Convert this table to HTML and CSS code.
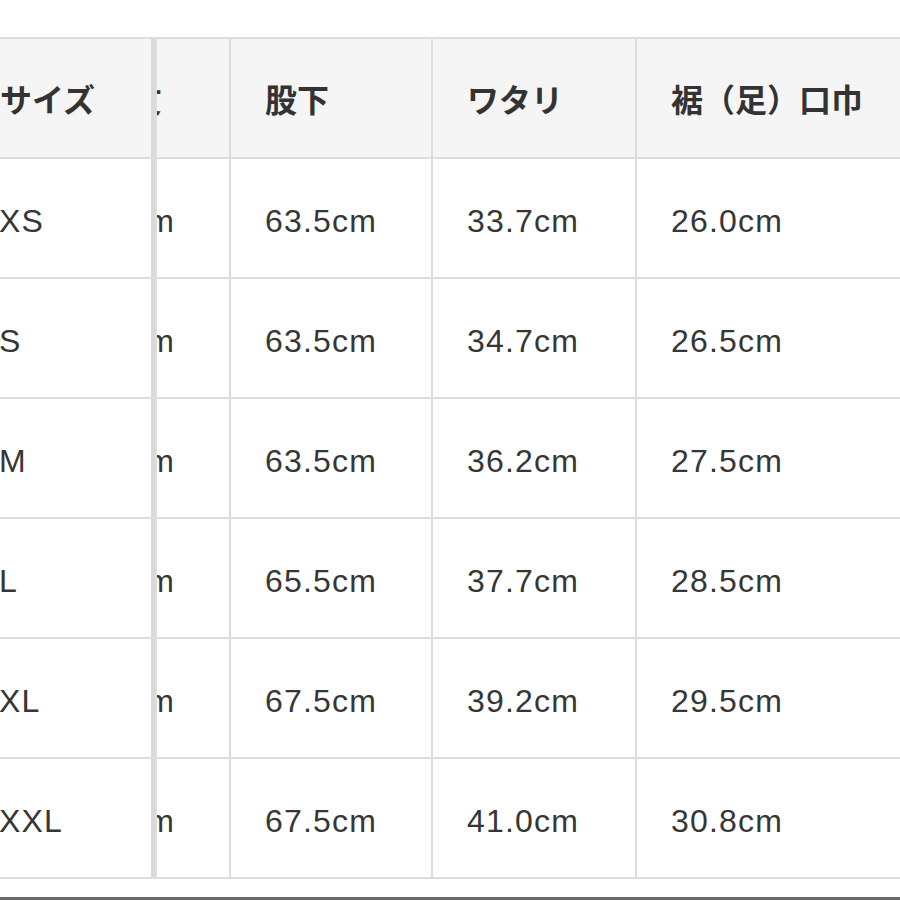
FILE: index.html
```html
<!DOCTYPE html>
<html lang="ja">
<head>
<meta charset="utf-8">
<link rel="stylesheet" href="styles.css">
</head>
<body>
<div class="page">
  <div class="table">
    <div class="cell head c1">サイズ</div>
    <div class="cell head c2"><span>総丈</span></div>
    <div class="cell head">股下</div>
    <div class="cell head">ワタリ</div>
    <div class="cell head">裾（足）口巾</div>

    <div class="cell c1">XS</div>
    <div class="cell c2"><span>98.0cm</span></div>
    <div class="cell">63.5cm</div>
    <div class="cell">33.7cm</div>
    <div class="cell">26.0cm</div>

    <div class="cell c1">S</div>
    <div class="cell c2"><span>99.0cm</span></div>
    <div class="cell">63.5cm</div>
    <div class="cell">34.7cm</div>
    <div class="cell">26.5cm</div>

    <div class="cell c1">M</div>
    <div class="cell c2"><span>100.0cm</span></div>
    <div class="cell">63.5cm</div>
    <div class="cell">36.2cm</div>
    <div class="cell">27.5cm</div>

    <div class="cell c1">L</div>
    <div class="cell c2"><span>102.0cm</span></div>
    <div class="cell">65.5cm</div>
    <div class="cell">37.7cm</div>
    <div class="cell">28.5cm</div>

    <div class="cell c1">XL</div>
    <div class="cell c2"><span>104.0cm</span></div>
    <div class="cell">67.5cm</div>
    <div class="cell">39.2cm</div>
    <div class="cell">29.5cm</div>

    <div class="cell c1">XXL</div>
    <div class="cell c2"><span>105.0cm</span></div>
    <div class="cell">67.5cm</div>
    <div class="cell">41.0cm</div>
    <div class="cell">30.8cm</div>
  </div>
  <div class="rule"></div>
</div>
</body>
</html>
```

FILE: styles.css
```css
html, body {
  margin: 0;
  padding: 0;
  background: #ffffff;
}
.page {
  width: 900px;
  height: 900px;
  overflow: hidden;
  position: relative;
  padding-top: 37px;
  box-sizing: border-box;
}
.table {
  margin-left: -37px;
  width: 990px;
  display: grid;
  grid-template-columns: 192px 72px 200px 202px 318px;
  grid-template-rows: 118px repeat(6, 118px);
  gap: 2px;
  padding: 2px 0;
  background: #dddddd;
}
.cell {
  background: #ffffff;
  display: flex;
  align-items: center;
  padding-left: 34px;
  padding-top: 6px;
  font-family: "Liberation Sans", Arial, "Noto Sans CJK JP", sans-serif;
  font-size: 32px;
  letter-spacing: 1.2px;
  color: #363636;
  overflow: hidden;
  white-space: nowrap;
}
.head {
  background: #f5f5f5;
  padding-left: 34px;
  padding-top: 0;
  font-family: "Noto Sans CJK JP", sans-serif;
  font-weight: 700;
  font-size: 32px;
  letter-spacing: 0;
  color: #333333;
}
.c1 {
  padding-left: 36px;
  border-right: 4px solid #d9d9d9;
}
.head.c1 {
  padding-left: 37px;
}
.c2 {
  padding-left: 0;
  justify-content: flex-end;
  padding-right: 54px;
}
.head.c2 {
  padding-right: 67px;
}
.rule {
  position: absolute;
  left: 0;
  right: 0;
  bottom: 0;
  height: 3px;
  background: #6b6b6b;
}
```
